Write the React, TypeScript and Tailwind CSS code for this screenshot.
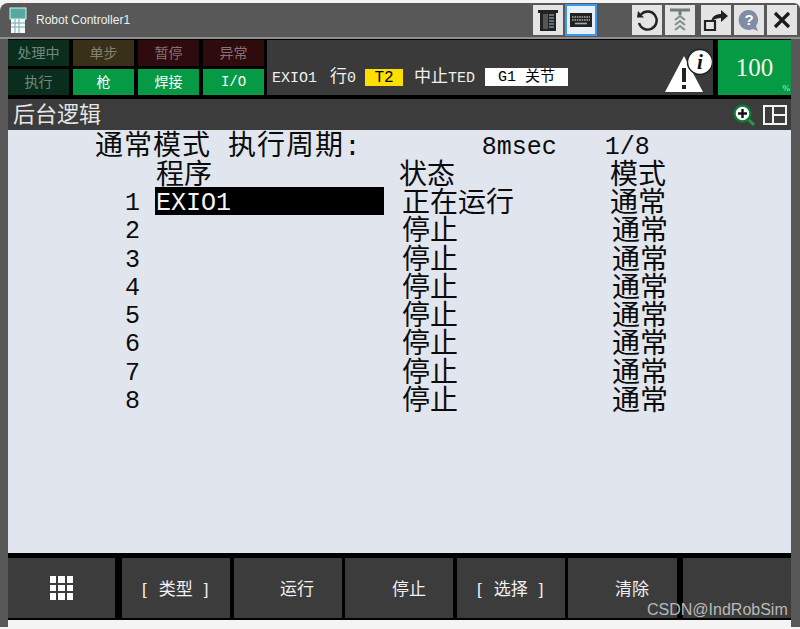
import type { ReactNode } from "react";

const MONO = "font-['Liberation_Mono','Noto_Sans_CJK_SC',monospace]";

const statusTop = [
	{ label: "处理中", cls: "bg-[#0b2d1e] text-[#6f8a7c]" },
	{ label: "单步", cls: "bg-[#383018] text-[#85806c]" },
	{ label: "暂停", cls: "bg-[#2e0b0d] text-[#8a7173]" },
	{ label: "异常", cls: "bg-[#2e0b0d] text-[#8a7173]" },
];

const statusBottom = [
	{ label: "执行", cls: "bg-[#0b2d1e] text-[#6f8a7c]" },
	{ label: "枪", cls: "bg-[#069a45] text-white" },
	{ label: "焊接", cls: "bg-[#069a45] text-white" },
	{ label: "I/O", cls: "bg-[#069a45] text-white" },
];

const rows = [
	{ n: 1, prog: "EXIO1", state: "正在运行" },
	{ n: 2, prog: "", state: "停止" },
	{ n: 3, prog: "", state: "停止" },
	{ n: 4, prog: "", state: "停止" },
	{ n: 5, prog: "", state: "停止" },
	{ n: 6, prog: "", state: "停止" },
	{ n: 7, prog: "", state: "停止" },
	{ n: 8, prog: "", state: "停止" },
];

const IconBtn = ({ children, cls = "" }: { children: ReactNode; cls?: string }) => (
	<div className={`flex h-[30px] w-[30px] items-center justify-center bg-[#e4e4e4] ${cls}`}>
		{children}
	</div>
);

const FnBtn = ({ children, cls = "" }: { children?: ReactNode; cls?: string }) => (
	<div className={`flex h-full items-center bg-[#3c3c3c] pt-[3px] text-[17px] text-[#f0f0f0] ${cls}`}>
		{children}
	</div>
);

const Bracketed = ({ label }: { label: string }) => (
	<div className="flex w-full items-center pl-[20px]">
		<span>[</span>
		<span className="ml-[12px]">{label}</span>
		<span className="ml-[11px]">]</span>
	</div>
);

export default function App() {
	return (
		<div className="relative h-[629px] w-[800px] overflow-hidden bg-[#f4f4f4] font-['Liberation_Sans','Noto_Sans_CJK_SC',sans-serif]">
			<div className="mt-[3px] flex h-[624px] flex-col rounded-tl-[8px] rounded-tr-[6px] bg-[#585858]">
				{/* title bar */}
				<div className="flex h-[34px] items-center">
					<svg width="24" height="30" viewBox="0 0 24 30" className="ml-[8px] mt-[-2px]">
						<circle cx="4" cy="2" r="1.5" fill="#555" />
						<circle cx="16" cy="2" r="1.5" fill="#c33" />
						<rect x="2" y="4" width="16" height="11" fill="#56a8a0" stroke="#bfe" strokeWidth="1" />
						<rect x="3" y="15" width="14" height="14" fill="#f4f8fa" />
						<path d="M7 15v14M11 15v14M3 19h14M3 23h14" stroke="#7aa" strokeWidth="1" />
					</svg>
					<span className="ml-[4px] text-[12px] text-[#f0f0f0]">Robot Controller1</span>
					<div className="ml-[403px] flex items-center gap-[2px]">
						<IconBtn>
							<svg width="22" height="24" viewBox="0 0 22 24">
								<path d="M1 2h20v3h-2v18H3V5H1z" fill="#222" />
								<path d="M6 6h5v15H6z" fill="#555" />
								<path d="M12 7h5M12 10h5M12 13h5M12 16h5M12 19h5" stroke="#7a8aa0" strokeWidth="1.6" />
							</svg>
						</IconBtn>
						<div className="flex h-[32px] w-[32px] items-center justify-center border-[2px] border-[#3d97ec] bg-[#e8f0f8]">
							<svg width="22" height="14" viewBox="0 0 22 14">
								<rect width="22" height="14" fill="#222" />
								<path d="M2 4h18M2 7h18" stroke="#aaa" strokeWidth="1.6" strokeDasharray="1.6 .8" />
								<path d="M5 10.5h12" stroke="#aaa" strokeWidth="1.6" />
							</svg>
						</div>
					</div>
					<div className="ml-[35px] flex items-center gap-[3px]">
						<IconBtn>
							<svg width="24" height="24" viewBox="0 0 24 24" fill="none">
								<path d="M6 6.5A9 9 0 1 1 4 15" stroke="#222" strokeWidth="2.4" />
								<path d="M2 9.5 L9 9.5 L3 3z" fill="#222" />
							</svg>
						</IconBtn>
						<IconBtn cls="bg-[#c4c4c4]">
							<svg width="24" height="26" viewBox="0 0 24 26" fill="none">
								<path d="M2 3h20" stroke="#6f7f78" strokeWidth="3" />
								<path d="M12 3v5" stroke="#6f7f78" strokeWidth="3" />
								<path d="M7 13l5-4 5 4M7 18l5-4 5 4M7 23l5-4 5 4" stroke="#7f8f88" strokeWidth="2" />
							</svg>
						</IconBtn>
						<IconBtn cls="ml-[3px]">
							<svg width="26" height="24" viewBox="0 0 26 24" fill="none">
								<path d="M2 13h10v9H2z" stroke="#222" strokeWidth="2.2" />
								<path d="M8 14c1-6 5-8 10-8V2l7 6-7 6V10c-4 0-7 1-10 4z" fill="#222" />
							</svg>
						</IconBtn>
						<IconBtn>
							<svg width="24" height="24" viewBox="0 0 24 24">
								<path d="M12 2a10 10 0 1 0 4 19l5 2-2-5a10 10 0 0 0-7-16z" fill="#7f8ea6" />
								<text x="12" y="17" fontSize="15" fontWeight="700" textAnchor="middle" fill="#fff" fontFamily="Liberation Sans">?</text>
							</svg>
						</IconBtn>
						<IconBtn>
							<svg width="20" height="20" viewBox="0 0 20 20">
								<path d="M3 3l14 14M17 3L3 17" stroke="#1a1a1a" strokeWidth="3.2" />
							</svg>
						</IconBtn>
					</div>
				</div>
				<div className="h-[2px] bg-[#8f8f8f]" />
				{/* screen */}
				<div className="ml-[8px] mr-[9px] flex flex-1 flex-col bg-black">
					<div className="mt-[1px] flex h-[55px] bg-black">
						<div className="flex w-[256px] flex-col gap-[3px]">
							<div className="grid h-[26px] grid-cols-[61px_61px_61px_61px] gap-x-[4px]">
								{statusTop.map((s) => (
									<div key={s.label} className={`flex items-center justify-center text-[14px] ${s.cls}`}>
										{s.label}
									</div>
								))}
							</div>
							<div className="grid h-[26px] grid-cols-[61px_61px_61px_61px] gap-x-[4px]">
								{statusBottom.map((s) => (
									<div key={s.label} className={`flex items-center justify-center text-[14px] ${s.cls} ${s.label === "I/O" ? MONO : ""}`}>
										{s.label}
									</div>
								))}
							</div>
						</div>
						<div className={`ml-[3px] flex w-[446px] items-end bg-[#3a3a3a] pb-[9px] pl-[5px] text-[15px] text-[#f0f0f0] ${MONO}`}>
							<span className="mb-[-2px] leading-[18px]">EXIO1</span>
							<span className="mb-[-2px] ml-[13px] leading-[18px]"><span className="text-[17px] leading-none">行</span>0</span>
							<span className="ml-[9px] h-[17px] w-[38px] bg-[#ffdf00] text-center text-[16px] leading-[18px] text-black">T2</span>
							<span className="mb-[-2px] ml-[11px] leading-[18px]"><span className="text-[17px] leading-none">中止</span>TED</span>
							<span className="ml-[10px] h-[18px] w-[83px] overflow-hidden whitespace-pre bg-white text-center leading-[19px] text-black">G1 <span className="text-[15px] leading-none">关节</span></span>
							<div className="mb-[-8px] ml-auto mr-[1px] h-[46px] w-[48px]">
								<svg width="48" height="46" viewBox="0 0 48 46">
									<path d="M20 8L1 44h38z" fill="#fff" />
									<rect x="18" y="20" width="4" height="14" fill="#222" />
									<rect x="18" y="37" width="4" height="4" fill="#222" />
									<circle cx="36" cy="14" r="12.5" fill="#fff" stroke="#222" strokeWidth="1.5" />
									<text x="36" y="21" fontSize="21" fontStyle="italic" fontWeight="700" textAnchor="middle" fill="#111" fontFamily="Liberation Serif">i</text>
								</svg>
							</div>
						</div>
						<div className="relative ml-[5px] flex w-[73px] items-center justify-center bg-[#069a45] font-['Liberation_Serif',serif] text-[25px]">
							<span className="text-[#f4f4ec]">100</span>
							<span className="absolute bottom-0 right-[1px] text-[9px] text-[#bfe8cc]">%</span>
						</div>
					</div>
					<div className="mt-[4px] flex h-[31px] items-center justify-between bg-[#3c3c3c] pl-[5px] pr-[4px]">
						<span className="text-[22px] leading-none text-[#e6e6e6]">后台逻辑</span>
						<div className="flex items-center gap-[6px]">
							<svg width="24" height="22" viewBox="0 0 24 22" fill="none">
								<path d="M15 15l6 6" stroke="#1f9a4a" strokeWidth="3" />
								<circle cx="9.5" cy="9.5" r="8" fill="#fff" stroke="#0d7a36" strokeWidth="2.4" />
								<path d="M9.5 5v9M5 9.5h9" stroke="#111" strokeWidth="2.4" />
							</svg>
							<svg width="24" height="20" viewBox="0 0 24 20" fill="none" stroke="#f2f2f2" strokeWidth="2">
								<rect x="1" y="1" width="22" height="18" />
								<path d="M10 1v18M10 10h13" />
							</svg>
						</div>
					</div>
					<div className={`flex-1 bg-[#e1e6ee] text-[25px] leading-[33px] text-[#0c0c0c] ${MONO}`}>
						<div className="flex h-[28.75px] pl-[87px] leading-[35px]">
							<span className="whitespace-pre text-[28px] tracking-[1px]">通常模式</span>
							<span className="ml-[17px] whitespace-pre text-[28px] tracking-[1px]">执行周期:</span>
							<span className="ml-[120px] whitespace-pre">8msec</span>
							<span className="ml-[48px]">1/8</span>
						</div>
						<div className="grid h-[28.25px] grid-cols-[134px_243px_211px_1fr] text-[28px] leading-[35px]">
							<span />
							<span className="pl-[14px]">程序</span>
							<span className="pl-[14px]">状态</span>
							<span className="pl-[14px]">模式</span>
						</div>
						{rows.map((r) => (
							<div key={r.n} className="grid h-[28.25px] grid-cols-[132px_229px_16px_225px_1fr]">
								<span className="text-right">{r.n}</span>
								<div className="ml-[15px] w-[229px]">
									{r.prog && <div className="h-[28.25px] bg-black pl-[1px] text-[#f5f5f5]">{r.prog}</div>}
								</div>
								<span />
								<span className="pl-[17px] text-[28px] leading-[35px]">{r.state}</span>
								<span className={`text-[28px] leading-[35px] ${r.n === 1 ? "" : "pl-[2px]"}`}>通常</span>
							</div>
						))}
					</div>
					<div className="mb-[2px] mt-[5px] flex h-[60px]">
						<FnBtn cls="w-[107px] justify-center">
							<div className="mt-[-3px] grid grid-cols-3 gap-[2px]">
								{Array.from({ length: 9 }).map((_, i) => (
									<div key={i} className="h-[6.5px] w-[6.5px] bg-white" />
								))}
							</div>
						</FnBtn>
						<FnBtn cls="ml-[7px] w-[108px]"><Bracketed label="类型" /></FnBtn>
						<FnBtn cls="ml-[4px] w-[108px] pl-[46px]">运行</FnBtn>
						<FnBtn cls="ml-[3px] w-[108px] pl-[47px]">停止</FnBtn>
						<FnBtn cls="ml-[4px] w-[108px]"><Bracketed label="选择" /></FnBtn>
						<FnBtn cls="ml-[3px] w-[109px] pl-[47px]">清除</FnBtn>
						<FnBtn cls="ml-[6px] w-[108px]" />
					</div>
				</div>
				<div className="ml-[8px] mr-[9px] h-[7px] bg-[#f4f4f4]" />
			</div>
			<span className="absolute left-[647px] top-[601px] text-[16px] leading-[18px] text-[#b9b9b9]">CSDN@IndRobSim</span>
		</div>
	);
}
